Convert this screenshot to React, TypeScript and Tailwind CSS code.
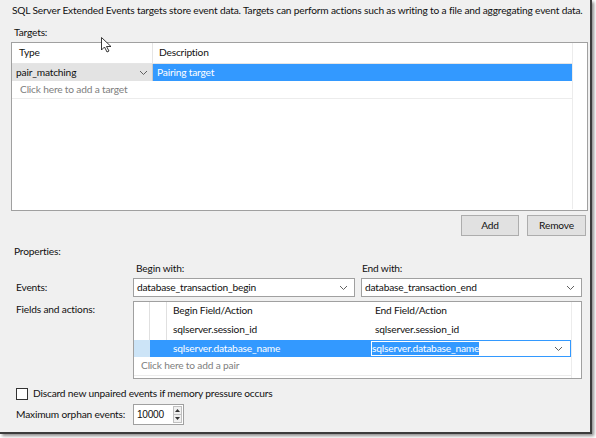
const Chevron = ({ className = "" }: { className?: string }) => (
	<svg width="9" height="6" viewBox="0 0 9 6" className={className}>
		<path d="M1 1l3.5 3.5L8 1" fill="none" stroke="#606060" strokeWidth="1" />
	</svg>
);

const Combo = ({ value }: { value: string }) => (
	<div className="flex h-[19px] items-center justify-between border border-[#a0a0a0] bg-white pl-[3px] pr-[6px]">
		<span>{value}</span>
		<Chevron />
	</div>
);

export default function App() {
	return (
		<div className="h-[438px] w-[596px] bg-white font-['Lato',sans-serif] text-[10.2px] tracking-[-0.18px] text-[#111]">
			<div className="relative flex h-[434px] w-[592px] flex-col border-b-2 border-r-2 border-[#3c3c3c] bg-[#f0f0f0] shadow-[2px_2px_3px_rgba(0,0,0,0.45)]">
				<p className="mt-[2px] h-[16px] whitespace-nowrap pl-[12px] leading-[16px]">
					SQL Server Extended Events targets store event data. Targets can perform actions such as writing to a file and aggregating event data.
				</p>
				<p className="mt-[6px] h-[16px] pl-[14px] leading-[16px]">Targets:</p>

				{/* targets grid */}
				<div className="ml-[11px] mt-[2px] h-[169px] w-[577px] border border-[#a0a0a0] bg-white">
					<div className="w-[561px] border-r border-[#ececec]">
						<div className="flex h-[21px] border-b border-[#e5e5e5]">
							<div className="flex w-[141px] items-center border-r border-[#e5e5e5] pl-[7px]">Type</div>
							<div className="flex flex-1 items-center pl-[6px]">Description</div>
						</div>
						<div className="flex h-[17px]">
							<div className="flex w-[141px] items-center justify-between border-r border-[#c8c8c8] bg-[#e3e3e3] pl-[4px] pr-[4px]">
								<span>pair_matching</span>
								<Chevron />
							</div>
							<div className="flex flex-1 items-center bg-[#3399ff] pl-[4px] text-white">Pairing target</div>
						</div>
						<div className="flex h-[18px] items-center border-b border-[#ececec] pl-[8px] text-[#808080]">
							Click here to add a target
						</div>
						<div className="h-[110px]" />
					</div>
				</div>

				<div className="mr-[4px] mt-[4px] flex justify-end gap-[8px]">
					<button className="h-[21px] w-[58px] border border-[#adadad] bg-[#e1e1e1]">Add</button>
					<button className="h-[21px] w-[59px] border border-[#adadad] bg-[#e1e1e1]">Remove</button>
				</div>

				<p className="mt-[7px] h-[16px] pl-[14px] leading-[16px]">Properties:</p>

				<div className="mt-[1px] flex pl-[136px]">
					<span className="h-[16px] w-[226px] leading-[16px]">Begin with:</span>
					<span className="h-[16px] leading-[16px]">End with:</span>
				</div>

				<div className="mt-[2px] flex items-center">
					<span className="w-[133px] pl-[16px]">Events:</span>
					<div className="flex gap-[6px]">
						<div className="w-[222px]">
							<Combo value="database_transaction_begin" />
						</div>
						<div className="w-[221px]">
							<Combo value="database_transaction_end" />
						</div>
					</div>
				</div>

				<div className="mt-[4px] flex">
					<span className="w-[133px] pl-[16px] pt-[1px]">Fields and actions:</span>
					<div className="h-[78px] w-[449px] border border-[#a0a0a0] bg-white">
						<div className="h-full w-[438px] border-r border-[#ececec]">
							<div className="flex h-[18px]">
								<div className="w-[16px] border-r border-[#e0e0e0]" />
								<div className="w-[17px] border-r border-[#e0e0e0]" />
								<div className="flex w-[203px] items-center pl-[6px]">Begin Field/Action</div>
								<div className="flex flex-1 items-center pl-[5px]">End Field/Action</div>
							</div>
							<div className="flex h-[20px]">
								<div className="w-[16px] border-r border-[#e0e0e0]" />
								<div className="w-[17px] border-r border-[#e0e0e0]" />
								<div className="flex w-[203px] items-center pl-[6px]">sqlserver.session_id</div>
								<div className="flex flex-1 items-center pl-[5px]">sqlserver.session_id</div>
							</div>
							<div className="flex h-[17px]">
								<div className="w-[16px] bg-[#cce4f7]" />
								<div className="w-[17px] bg-[#3399ff]" />
								<div className="flex w-[203px] items-center bg-[#3399ff] pl-[6px] text-white">sqlserver.database_name</div>
								<div className="flex flex-1 items-center justify-between border border-[#3399ff] pl-[1px] pr-[7px]">
									<span className="bg-[#3399ff] leading-[13px] text-white">sqlserver.database_name</span>
									<Chevron />
								</div>
							</div>
							<div className="flex h-[19px] items-center border-b border-[#ececec] pl-[7px] text-[#808080]">
								Click here to add a pair
							</div>
						</div>
					</div>
				</div>

				<label className="ml-[16px] mt-[7px] flex items-center gap-[5px]">
					<span className="h-[12px] w-[12px] border border-[#333] bg-white" />
					<span>Discard new unpaired events if memory pressure occurs</span>
				</label>

				<div className="mt-[3px] flex items-center">
					<span className="w-[133px] whitespace-nowrap pl-[16px]">Maximum orphan events:</span>
					<div className="flex h-[21px] w-[51px] items-center justify-between border border-[#a0a0a0] bg-white pl-[3px] pr-[1px]">
						<span className="font-['Liberation_Sans',sans-serif] tracking-[-0.3px]">10000</span>
						<div className="flex h-[17px] w-[9px] flex-col border border-[#c0c0c0] bg-[#f0f0f0]">
							<div className="flex flex-1 items-center justify-center border-b border-[#c0c0c0]">
								<svg width="5" height="3" viewBox="0 0 5 3"><path d="M0 3L2.5 0L5 3z" fill="#333" /></svg>
							</div>
							<div className="flex flex-1 items-center justify-center">
								<svg width="5" height="3" viewBox="0 0 5 3"><path d="M0 0L2.5 3L5 0z" fill="#333" /></svg>
							</div>
						</div>
					</div>
				</div>

				{/* mouse pointer */}
				<svg className="absolute left-[101px] top-[37px]" width="11" height="16" viewBox="0 0 11 16">
					<path d="M0.5 0.5V13L3.5 10L6 15L8 14L5.5 9.5H10Z" fill="white" stroke="#222" strokeWidth="0.9" />
				</svg>
			</div>
		</div>
	);
}
